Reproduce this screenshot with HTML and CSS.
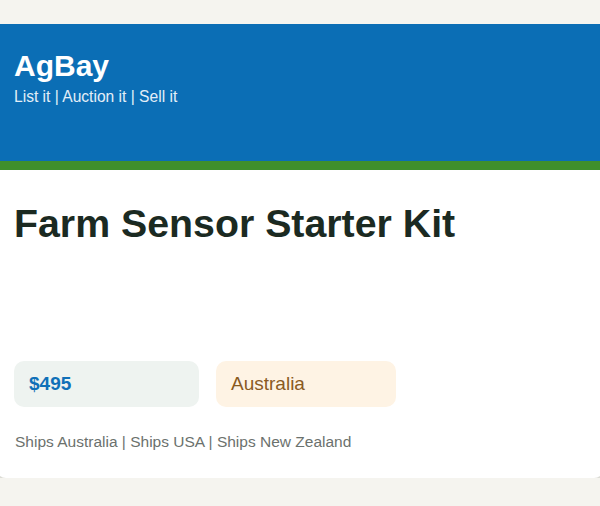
FILE: index.html
```html
<!DOCTYPE html>
<html lang="en">
<head>
<meta charset="utf-8">
<title>AgBay</title>
<link rel="stylesheet" href="styles.css">
</head>
<body>
<div class="card">
  <header class="masthead">
    <div class="brand">AgBay</div>
    <div class="tagline">List it | Auction it | Sell it</div>
  </header>
  <main class="listing">
    <h1 class="title">Farm Sensor Starter Kit</h1>
    <div class="chips">
      <div class="chip chip-price">$495</div>
      <div class="chip chip-place">Australia</div>
    </div>
    <p class="shipping">Ships Australia | Ships USA | Ships New Zealand</p>
  </main>
</div>
</body>
</html>
```

FILE: styles.css
```css
html, body {
  margin: 0;
  padding: 0;
}
body {
  background: #f5f4ef;
  font-family: "Liberation Sans", Arial, sans-serif;
  padding-top: 24px;
  overflow: hidden;
}
.card {
  margin: 0 -4px;
  background: #ffffff;
  border-radius: 0 0 10px 10px;
  overflow: hidden;
  box-shadow: 0 3px 0 #dcdcd5;
}
.masthead {
  background: #0b6eb5;
  color: #ffffff;
  padding: 25px 18px 0;
  border-bottom: 9px solid #3f8f2b;
  height: 112px;
}
.brand {
  font-size: 30px;
  font-weight: bold;
  line-height: 34px;
}
.tagline {
  font-size: 15.6px;
  line-height: 18px;
  margin-top: 5px;
  color: #e3eef8;
}
.listing {
  padding: 30px 18px 27px;
}
.title {
  margin: 0 0 115px;
  font-size: 39.3px;
  line-height: 46px;
  font-weight: bold;
  color: #1b2a22;
}
.chips {
  display: flex;
  gap: 17px;
}
.chip {
  height: 46px;
  box-sizing: border-box;
  border-radius: 10px;
  display: flex;
  align-items: center;
  padding: 0 15px;
  font-size: 19px;
}
.chip-price {
  width: 185px;
  background: #eef3f0;
  color: #1070b8;
  font-weight: bold;
}
.chip-place {
  width: 180px;
  background: #fef3e4;
  color: #8a5a1f;
}
.shipping {
  margin: 26px 0 0 1px;
  font-size: 15.5px;
  line-height: 18px;
  color: #6b716d;
}
```
